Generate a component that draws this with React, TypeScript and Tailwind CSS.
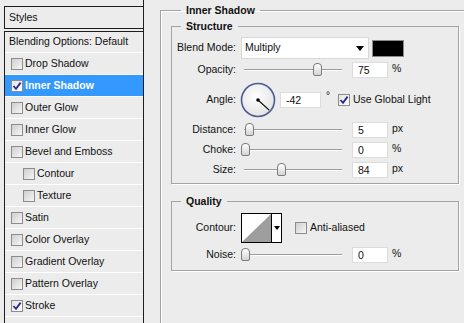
import React from 'react'

const FONT = { fontFamily: '"Liberation Sans", Arial, sans-serif' }

const EFFECTS: { name: string; indent?: boolean; on?: boolean; active?: boolean }[] = [
  { name: 'Drop Shadow' },
  { name: 'Inner Shadow', on: true, active: true },
  { name: 'Outer Glow' },
  { name: 'Inner Glow' },
  { name: 'Bevel and Emboss' },
  { name: 'Contour', indent: true },
  { name: 'Texture', indent: true },
  { name: 'Satin' },
  { name: 'Color Overlay' },
  { name: 'Gradient Overlay' },
  { name: 'Pattern Overlay' },
  { name: 'Stroke', on: true },
]

function Check({ on }: { on?: boolean }) {
  return (
    <span
      className={`w-[12px] h-[12px] shrink-0 border border-[#8c8c8c] flex items-center justify-center ${
        on ? 'bg-linear-to-br from-[#e4e4e4] to-white' : 'bg-linear-to-br from-[#cfcfcf] to-[#f6f6f6]'
      }`}
    >
      {on && (
        <svg width="10" height="10" viewBox="0 0 10 10">
          <path d="M1.5 5 L4 7.8 L8.6 1.6" fill="none" stroke="#27279a" strokeWidth="1.8" />
        </svg>
      )}
    </span>
  )
}

function Slider({ left }: { left: string }) {
  return (
    <div className="ml-[5px] w-[103px] h-[16px] relative flex items-center shrink-0">
      <div className="ml-[3px] w-[98px] h-[2px] border-t border-[#9d9d9d] border-b border-b-white" />
      <div
        className={`absolute top-[1px] ${left} w-[9px] h-[13px] rounded-t-[4px] rounded-b-[2px] border border-[#7a7a7a] bg-linear-to-b from-white to-[#d4d4d4]`}
      />
    </div>
  )
}

function Field({ value, w = 'w-[36px]', ml = 'ml-[8px]' }: { value: string; w?: string; ml?: string }) {
  return (
    <div className={`${ml} ${w} h-[16px] bg-white border border-[#dcdcdc] pl-[5px] leading-[14px] shrink-0`}>
      {value}
    </div>
  )
}

const LBL = 'w-[64px] text-right shrink-0'

function SliderRow({ label, left, value, unit, mt }: { label: string; left: string; value: string; unit: string; mt: string }) {
  return (
    <div className={`${mt} h-[16px] flex items-center`}>
      <span className={LBL}>{label}</span>
      <Slider left={left} />
      <Field value={value} />
      <span className="ml-[4px] -mt-[3px]">{unit}</span>
    </div>
  )
}

export default function App() {
  return (
    <div className="w-[464px] h-[323px] bg-[#ececec] overflow-hidden flex text-[10.5px] text-[#111]" style={FONT}>
      {/* effects list */}
      <div className="ml-[4px] w-[140px] shrink-0 flex flex-col pt-[6px] border-r border-[#1e1e1e]">
        <div className="h-[23px] border border-r-0 border-[#1e1e1e] pl-[4px] flex items-center">Styles</div>
        <div className="mt-[2px] flex-1 border-t border-l border-[#1e1e1e]">
          <div className="h-[21px] border-b border-white pl-[4px] flex items-center">Blending Options: Default</div>
          {EFFECTS.map((e) => (
            <div
              key={e.name}
              className={`h-[22px] border-b border-white flex items-center gap-[2px] ${e.indent ? 'pl-[18px]' : 'pl-[6px]'} ${
                e.active ? 'bg-[#3399ff] text-white font-bold' : ''
              }`}
            >
              <Check on={e.on} />
              <span>{e.name}</span>
            </div>
          ))}
        </div>
      </div>

      {/* settings */}
      <fieldset className="ml-[16px] mt-[3px] w-[330px] h-[360px] shrink-0 border border-[#a3a3a3] pl-[10px] shadow-[inset_1px_1px_0_#fff]">
        <legend className="ml-[10px] px-[5px] h-[14px] leading-[14px] font-bold">Inner Shadow</legend>

        <fieldset className="mt-[2px] w-[288px] border border-[#a3a3a3] pb-[5px] shadow-[1px_1px_0_#fff]">
          <legend className="ml-[9px] px-[5px] h-[14px] leading-[14px] font-bold">Structure</legend>

          <div className="mt-[4px] h-[22px] flex items-center">
            <span className={LBL}>Blend Mode:</span>
            <div className="ml-[5px] w-[128px] h-[22px] bg-white border border-[#d8d8d8] pl-[3px] flex items-center shrink-0">
              <span>Multiply</span>
              <svg className="ml-auto mr-[4px]" width="8" height="5" viewBox="0 0 8 5">
                <path d="M0 0 H8 L4 5 Z" fill="#000" />
              </svg>
            </div>
            <div className="ml-[3px] w-[32px] h-[17px] bg-black border border-[#8a8a8a] shrink-0" />
          </div>

          <SliderRow label="Opacity:" left="left-[72px]" value="75" unit="%" mt="mt-[3px]" />

          <div className="mt-[4px] h-[35px] flex items-center">
            <span className={LBL}>Angle:</span>
            <svg className="ml-[4px] shrink-0" width="36" height="36" viewBox="0 0 36 36">
              <defs>
                <radialGradient id="dial" cx="0.45" cy="0.4" r="0.6">
                  <stop offset="0" stopColor="#ffffff" />
                  <stop offset="1" stopColor="#e4e4e4" />
                </radialGradient>
              </defs>
              <circle cx="18" cy="18" r="16.5" fill="url(#dial)" stroke="#4c5b94" strokeWidth="1.6" />
              <line x1="18" y1="18" x2="29.2" y2="28.1" stroke="#000" strokeWidth="1.1" />
              <circle cx="18" cy="18" r="1.8" fill="#000" />
            </svg>
            <Field value="-42" w="w-[41px]" ml="ml-[4px]" />
            <span className="ml-[5px] -mt-[8px] text-[10px]">°</span>
            <span className="ml-[8px]">
              <Check on />
            </span>
            <span className="ml-[3px]">Use Global Light</span>
          </div>

          <SliderRow label="Distance:" left="left-[4px]" value="5" unit="px" mt="mt-[5px]" />
          <SliderRow label="Choke:" left="left-[0px]" value="0" unit="%" mt="mt-[4px]" />
          <SliderRow label="Size:" left="left-[36px]" value="84" unit="px" mt="mt-[4px]" />
        </fieldset>

        <fieldset className="mt-[10px] w-[288px] border border-[#a3a3a3] pb-[7px] shadow-[1px_1px_0_#fff]">
          <legend className="ml-[9px] px-[5px] h-[14px] leading-[14px] font-bold">Quality</legend>

          <div className="mt-[5px] h-[30px] flex items-center">
            <span className={LBL}>Contour:</span>
            <div className="ml-[5px] w-[41px] h-[30px] border border-black bg-white flex shrink-0">
              <svg width="29" height="28" viewBox="0 0 29 28">
                <path d="M0 28 L29 0 V28 Z" fill="#9e9e9e" />
              </svg>
              <div className="w-[1px] bg-black" />
              <div className="flex-1 flex items-center justify-center">
                <svg width="6" height="4" viewBox="0 0 6 4">
                  <path d="M0 0 H6 L3 4 Z" fill="#000" />
                </svg>
              </div>
            </div>
            <span className="ml-[13px]">
              <Check />
            </span>
            <span className="ml-[3px]">Anti-aliased</span>
          </div>

          <SliderRow label="Noise:" left="left-[0px]" value="0" unit="%" mt="mt-[4px]" />
        </fieldset>
      </fieldset>
    </div>
  )
}
